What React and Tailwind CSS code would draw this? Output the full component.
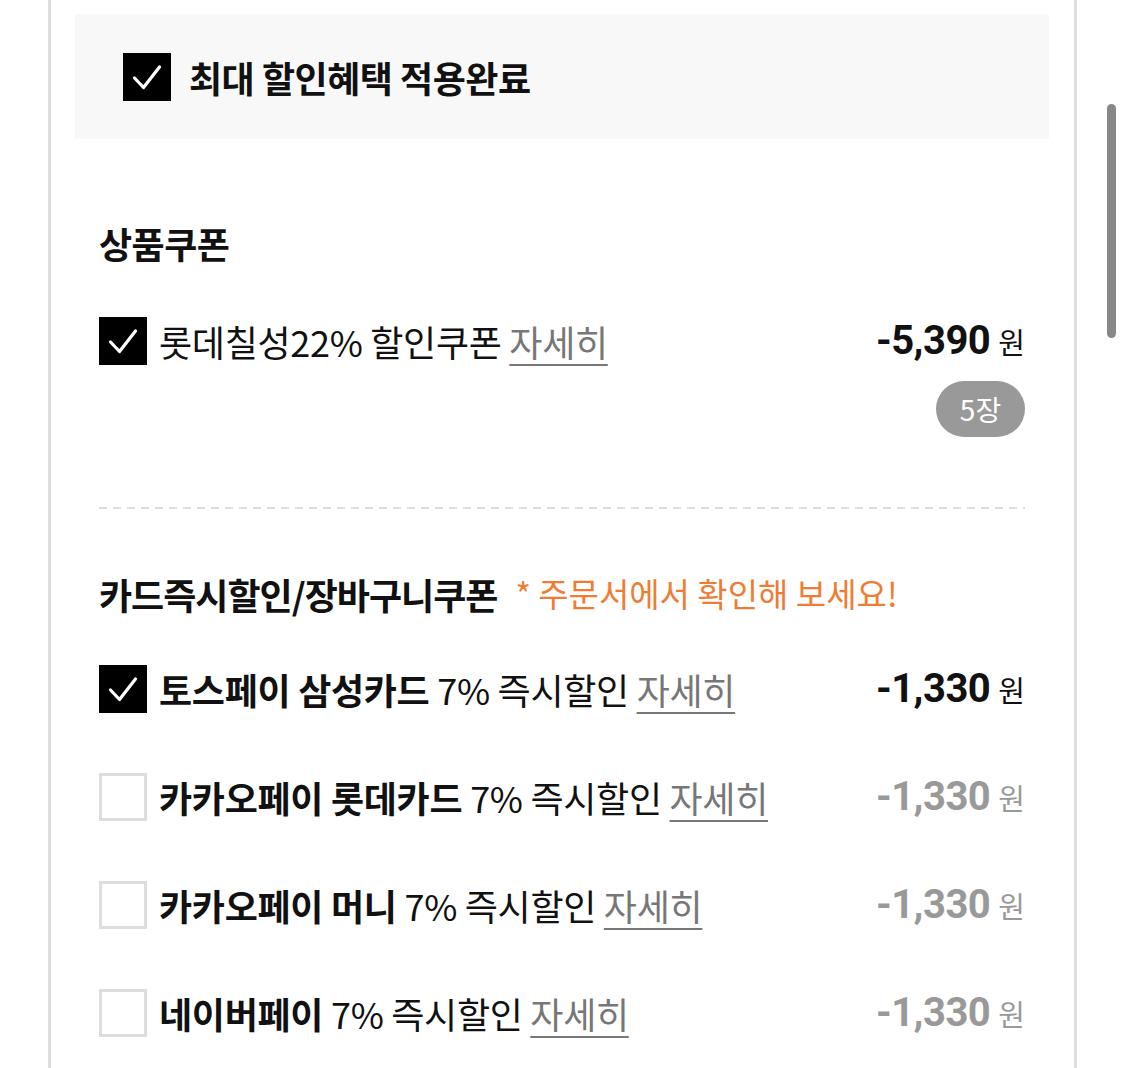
const KR = "font-['Noto_Sans_CJK_KR','Noto_Sans',sans-serif]";
const NUM = "font-['Roboto','Noto_Sans_CJK_KR',sans-serif]";

function Check({ checked }) {
  if (!checked) {
    return <span className="w-[48px] h-[48px] shrink-0 border-[3px] border-[#dddddd] bg-white" />;
  }
  return (
    <span className="w-[48px] h-[48px] shrink-0 bg-black flex items-center justify-center">
      <svg width="48" height="48" viewBox="0 0 48 48" fill="none">
        <path d="M11.5 25l9 9.5L36.5 14" stroke="#fff" strokeWidth="3.2" strokeLinecap="round" strokeLinejoin="round" />
      </svg>
    </span>
  );
}

function Amount({ value, active }) {
  return (
    <div className={`flex items-baseline gap-[8px] ${active ? "text-[#111]" : "text-[#999]"}`}>
      <span className={`${NUM} text-[40px] font-bold tracking-[-0.5px]`}>{value}</span>
      <span className={`${KR} text-[29px]`}>원</span>
    </div>
  );
}

function DiscountRow({ brand, label, value, checked }) {
  return (
    <div className="h-[48px] flex items-center">
      <Check checked={checked} />
      <p className="ml-[12px] text-[36px] tracking-[-0.3px] text-[#111] whitespace-nowrap leading-none">
        {brand && <span className="font-bold">{brand} </span>}
        {label}{" "}
        <span className="text-[#777] underline underline-offset-[7px] decoration-[2px]">자세히</span>
      </p>
      <div className="ml-auto">
        <Amount value={value} active={checked} />
      </div>
    </div>
  );
}

const cardRows = [
  { brand: "토스페이 삼성카드", checked: true },
  { brand: "카카오페이 롯데카드", checked: false },
  { brand: "카카오페이 머니", checked: false },
  { brand: "네이버페이", checked: false },
];

export default function App() {
  return (
    <div className={`${KR} relative bg-white min-h-[1068px] overflow-hidden`}>
      <div className="ml-[48px] w-[1029px] min-h-[1068px] border-x-[3px] border-[#dddddd] pt-[14px] pl-[24px] pr-[25px]">
        <div className="h-[125px] bg-[#f8f8f8] flex items-center pl-[48px]">
          <Check checked />
          <h2 className="ml-[18px] text-[36px] font-bold tracking-[-0.5px] text-[#111] leading-none">
            최대 할인혜택 적용완료
          </h2>
        </div>

        <div className="px-[24px]">
          <h3 className="mt-[80px] h-[48px] flex items-center text-[36px] font-bold tracking-[-0.5px] text-[#111]">
            상품쿠폰
          </h3>

          <div className="mt-[50px]">
            <DiscountRow label="롯데칠성22% 할인쿠폰" value="-5,390" checked />
          </div>
          <div className="mt-[16px] flex justify-end">
            <span className="w-[89px] h-[56px] rounded-full bg-[#999] text-white text-[28px] flex items-center justify-center">
              5장
            </span>
          </div>

          <div className="mt-[70px] h-[2px] bg-[repeating-linear-gradient(90deg,#dddddd_0_8px,transparent_8px_14px)]" />

          <h3 className="mt-[61px] h-[48px] flex items-center gap-[18px] whitespace-nowrap">
            <span className="text-[36px] font-bold tracking-[-1px] text-[#111]">카드즉시할인/장바구니쿠폰</span>
            <span className="text-[33px] text-[#ee7d33]">* 주문서에서 확인해 보세요!</span>
          </h3>

          <div className="mt-[47px] flex flex-col gap-[60px]">
            {cardRows.map((row) => (
              <DiscountRow key={row.brand} brand={row.brand} label="7% 즉시할인" value="-1,330" checked={row.checked} />
            ))}
          </div>
        </div>
      </div>

      {/* scroll indicator */}
      <div className="absolute left-[1107px] top-[104px] w-[9px] h-[234px] rounded-full bg-[#888]" />
    </div>
  );
}
